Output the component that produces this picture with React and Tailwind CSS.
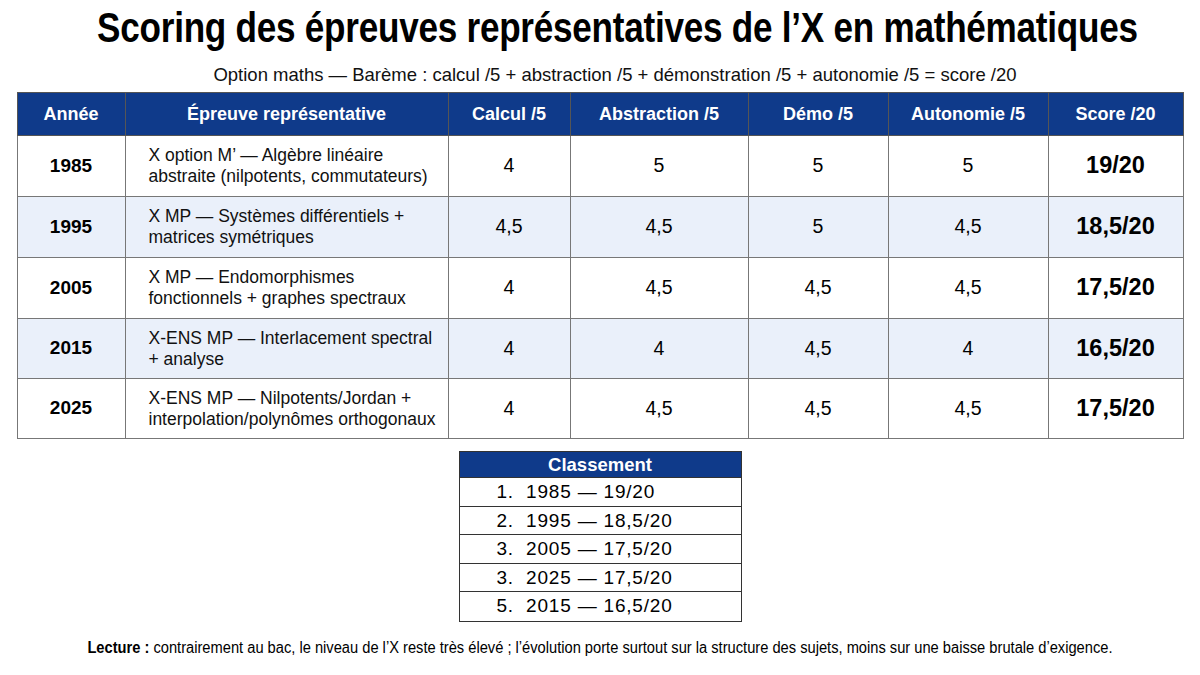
import React from "react";

const rows = [
  { y: "1985", e1: "X option M’ — Algèbre linéaire", e2: "abstraite (nilpotents, commutateurs)", c: "4", a: "5", d: "5", au: "5", s: "19/20", alt: false },
  { y: "1995", e1: "X MP — Systèmes différentiels +", e2: "matrices symétriques", c: "4,5", a: "4,5", d: "5", au: "4,5", s: "18,5/20", alt: true },
  { y: "2005", e1: "X MP — Endomorphismes", e2: "fonctionnels + graphes spectraux", c: "4", a: "4,5", d: "4,5", au: "4,5", s: "17,5/20", alt: false },
  { y: "2015", e1: "X-ENS MP — Interlacement spectral", e2: "+ analyse", c: "4", a: "4", d: "4,5", au: "4", s: "16,5/20", alt: true },
  { y: "2025", e1: "X-ENS MP — Nilpotents/Jordan +", e2: "interpolation/polynômes orthogonaux", c: "4", a: "4,5", d: "4,5", au: "4,5", s: "17,5/20", alt: false },
];

const ranking = [
  "1.  1985 — 19/20",
  "2.  1995 — 18,5/20",
  "3.  2005 — 17,5/20",
  "3.  2025 — 17,5/20",
  "5.  2015 — 16,5/20",
];

export default function App() {
  const sans = { fontFamily: '"Liberation Sans", Arial, sans-serif' };
  return (
    <div className="w-[1200px] h-[675px] bg-white text-black flex flex-col items-center overflow-hidden" style={sans}>
      <h1 className="mt-[4px] ml-[34px] text-[42px] leading-[48px] font-bold whitespace-nowrap scale-x-[0.836] tracking-[-0.3px]">
        Scoring des épreuves représentatives de l’X en mathématiques
      </h1>
      <p className="mt-[12px] ml-[30px] text-[18.5px] leading-[22px] text-[#111] whitespace-nowrap">
        Option maths — Barème : calcul /5 + abstraction /5 + démonstration /5 + autonomie /5 = score /20
      </p>
      <table className="mt-[6px] table-fixed border-collapse border border-[#555] w-[1166px]">
        <colgroup>
          <col className="w-[108px]" />
          <col className="w-[323px]" />
          <col className="w-[122px]" />
          <col className="w-[178px]" />
          <col className="w-[140px]" />
          <col className="w-[160px]" />
          <col className="w-[135px]" />
        </colgroup>
        <thead>
          <tr className="h-[43px] bg-[#0f3a8a] text-white text-[18px] font-bold">
            {["Année", "Épreuve représentative", "Calcul /5", "Abstraction /5", "Démo /5", "Autonomie /5", "Score /20"].map((h) => (
              <th key={h} className="border border-[#555] text-center font-bold">{h}</th>
            ))}
          </tr>
        </thead>
        <tbody>
          {rows.map((r, i) => (
            <tr key={r.y} className={`${i < 3 ? "h-[61px]" : "h-[60px]"} ${r.alt ? "bg-[#eaf0fa]" : "bg-white"}`}>
              <td className="border border-[#777] text-center text-[19px] font-bold">{r.y}</td>
              <td className="border border-[#777] pl-[23px] text-[17.5px] leading-[21px] text-[#111]">
                <div>{r.e1}</div>
                <div>{r.e2}</div>
              </td>
              <td className="border border-[#777] text-center text-[19.5px]">{r.c}</td>
              <td className="border border-[#777] text-center text-[19.5px]">{r.a}</td>
              <td className="border border-[#777] text-center text-[19.5px]">{r.d}</td>
              <td className="border border-[#777] text-center text-[19.5px]">{r.au}</td>
              <td className="border border-[#777] text-center text-[23.5px] font-bold">{r.s}</td>
            </tr>
          ))}
        </tbody>
      </table>
      <div className="mt-[12px] w-[283px] border-[1.5px] border-[#333]">
        <div className="h-[26px] bg-[#0f3a8a] text-white text-[18.5px] font-bold leading-[26px] text-center border-b-[1.5px] border-[#333]">
          Classement
        </div>
        {ranking.map((t, i) => (
          <div key={i} className={`h-[28.5px] leading-[28px] pl-[37px] text-[19px] tracking-[0.8px] whitespace-pre ${i < 4 ? "border-b-[1.5px] border-[#333]" : ""}`}>
            {t}
          </div>
        ))}
      </div>
      <p className="mt-[17px] text-[16px] leading-[18px] whitespace-nowrap scale-x-[0.917]">
        <span className="font-bold">Lecture :</span> contrairement au bac, le niveau de l’X reste très élevé ; l’évolution porte surtout sur la structure des sujets, moins sur une baisse brutale d’exigence.
      </p>
    </div>
  );
}
